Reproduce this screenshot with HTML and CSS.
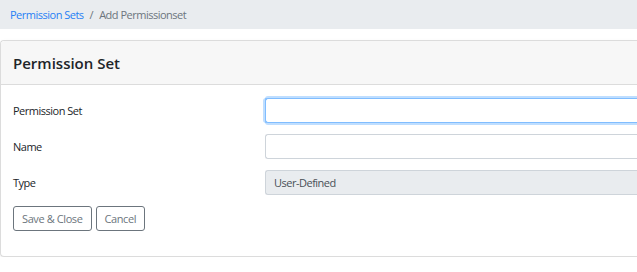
FILE: index.html
```html
<!DOCTYPE html>
<html lang="en">
<head>
<meta charset="utf-8">
<title>Add Permissionset</title>
<link rel="stylesheet" href="styles.css">
</head>
<body>
<nav class="breadcrumb">
  <a class="crumb-link" href="#">Permission Sets</a>
  <span class="crumb-sep">/</span>
  <span class="crumb-active">Add Permissionset</span>
</nav>
<div class="card">
  <div class="card-header">
    <h1 class="card-title">Permission Set</h1>
  </div>
  <form class="card-body">
    <div class="form-row">
      <label class="form-label" for="ps">Permission Set</label>
      <input class="form-input is-focused" id="ps" type="text">
    </div>
    <div class="form-row">
      <label class="form-label" for="name">Name</label>
      <input class="form-input" id="name" type="text">
    </div>
    <div class="form-row">
      <label class="form-label" for="type">Type</label>
      <input class="form-input is-disabled" id="type" type="text" value="User-Defined" disabled>
    </div>
    <div class="actions">
      <button class="btn" type="button">Save &amp; Close</button>
      <button class="btn" type="button">Cancel</button>
    </div>
  </form>
</div>
</body>
</html>
```
FILE: styles.css
```css
html, body {
  margin: 0;
  padding: 0;
  overflow: hidden;
  background: #ffffff;
}
body {
  font-family: "Open Sans", "Noto Sans", sans-serif;
  font-size: 11px;
  letter-spacing: -0.5px;
  color: #212529;
}
.breadcrumb {
  display: flex;
  align-items: center;
  gap: 6px;
  height: 29px;
  padding: 0 10px;
  background: #e9ecef;
  box-sizing: border-box;
}
.crumb-link {
  color: #2680f5;
  text-decoration: none;
}
.crumb-sep, .crumb-active {
  color: #6c757d;
}
.card {
  margin-top: 11px;
  border: 1px solid #dcdcdc;
  border-right: none;
  border-radius: 4px 0 0 4px;
  background: #fff;
  box-shadow: 0 3px 6px rgba(0, 0, 0, 0.06);
}
.card-header {
  height: 43px;
  display: flex;
  align-items: center;
  padding: 0 12px;
  background: #f7f7f7;
  border-bottom: 1px solid #dcdcdc;
  border-radius: 4px 0 0 0;
}
.card-title {
  margin: 0;
  font-size: 15px;
  font-weight: 600;
  letter-spacing: 0;
  color: #212529;
}
.card-body {
  display: flex;
  flex-direction: column;
  gap: 11px;
  padding: 13px 0 25px 12px;
}
.form-row {
  display: grid;
  grid-template-columns: 252px 1fr;
  align-items: center;
}
.form-label {
  color: #212529;
}
.form-input {
  height: 25px;
  box-sizing: border-box;
  border: 1px solid #ced4da;
  border-right: none;
  border-radius: 3px 0 0 3px;
  padding: 0 8px;
  font: inherit;
  letter-spacing: inherit;
  color: #495057;
  background: #fff;
  outline: none;
}
.is-focused {
  border-color: #80bdff;
  box-shadow: -2px 0 0 0 rgba(0, 123, 255, 0.25), 0 -2px 0 0 rgba(0, 123, 255, 0.25), 0 2px 0 0 rgba(0, 123, 255, 0.25);
}
.is-disabled {
  background: #e9ecef;
  color: #495057;
  -webkit-text-fill-color: #495057;
  opacity: 1;
}
.actions {
  display: flex;
  gap: 4px;
}
.btn {
  height: 25px;
  padding: 0 8px;
  border: 1px solid #6c757d;
  border-radius: 3px;
  background: #fff;
  color: #6c757d;
  font: inherit;
  letter-spacing: -0.4px;
  cursor: pointer;
}
```
